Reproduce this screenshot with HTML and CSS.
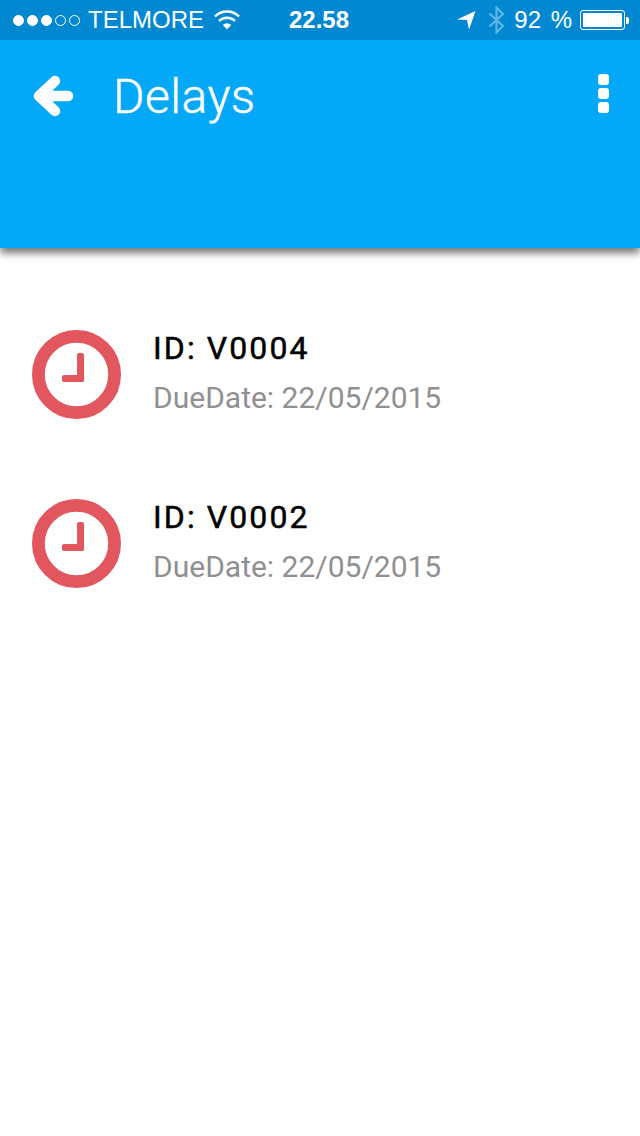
FILE: index.html
```html
<!DOCTYPE html>
<html>
<head>
  <title>Delays</title>
  <link rel="stylesheet" href="styles.css">
</head>
<body>
  <header class="appbar">
    <div class="status">
      <div class="status-left">
        <span class="dots">
          <i class="dot on"></i><i class="dot on"></i><i class="dot on"></i><i class="dot"></i><i class="dot"></i>
        </span>
        <span class="carrier">TELMORE</span>
        <svg class="wifi" width="26" height="20" viewBox="0 0 26 20">
          <path d="M1 6.500a17 17 0 0 1 24 0" fill="none" stroke="#fff" stroke-width="2.400"/>
          <path d="M5 11a11.500 11.500 0 0 1 16 0" fill="none" stroke="#fff" stroke-width="2.400"/>
          <path d="M8.800 15a6 6 0 0 1 8.400 0L13 19.500z" fill="#fff"/>
        </svg>
      </div>
      <span class="time">22.58</span>
      <div class="status-right">
        <svg class="arrow" width="19" height="20" viewBox="0 0 19 20">
          <path d="M0 9.500 18.500 1 12 19.500 10 10z" fill="#fff"/>
        </svg>
        <svg class="bt" width="17" height="28" viewBox="0 0 17 28">
          <path d="M1.500 7.500 15 20 8.500 26.500V1.500L15 8 1.500 20.500" fill="none" stroke="#5fb4e4" stroke-width="2.200"/>
        </svg>
        <span class="batt-text">92 %</span>
        <div class="battery"><div class="battery-fill"></div></div>
        <div class="battery-tip"></div>
      </div>
    </div>
    <div class="toolbar">
      <svg class="back" width="42" height="42" viewBox="0 0 42 42">
        <path d="M22 6 6 21 22 36M6 21H35" fill="none" stroke="#fff" stroke-width="10.500" stroke-linecap="round" stroke-linejoin="round"/>
      </svg>
      <h1 class="title">Delays</h1>
      <div class="menu"><i></i><i></i><i></i></div>
    </div>
  </header>

  <section class="list">
    <div class="item">
      <svg class="clock" width="89" height="90" viewBox="0 0 89 90">
        <circle cx="44.500" cy="44.500" r="38.100" fill="none" stroke="#e2575e" stroke-width="12.800"/>
        <rect x="45" y="23" width="7" height="29" rx="2" fill="#e2575e"/>
        <rect x="30" y="45" width="22" height="7" rx="2" fill="#e2575e"/>
      </svg>
      <div class="info">
        <h3>ID: V0004</h3>
        <p>DueDate: 22/05/2015</p>
      </div>
    </div>
    <div class="item">
      <svg class="clock" width="89" height="90" viewBox="0 0 89 90">
        <circle cx="44.500" cy="44.500" r="38.100" fill="none" stroke="#e2575e" stroke-width="12.800"/>
        <rect x="45" y="23" width="7" height="29" rx="2" fill="#e2575e"/>
        <rect x="30" y="45" width="22" height="7" rx="2" fill="#e2575e"/>
      </svg>
      <div class="info">
        <h3>ID: V0002</h3>
        <p>DueDate: 22/05/2015</p>
      </div>
    </div>
  </section>
</body>
</html>
```

FILE: styles.css
```css
html, body {
  margin: 0;
  padding: 0;
  background-color: white;
}
body {
  font-family: Roboto, sans-serif;
  height: 1136px;
  overflow: hidden;
}
.appbar {
  height: 248px;
  background-color: #03a9f8;
  box-shadow: 0 5px 8px rgba(0, 0, 0, 0.55);
}
.status {
  height: 40px;
  background-color: #0288d1;
  color: white;
  font-family: "Liberation Sans", sans-serif;
  font-size: 24px;
  display: flex;
  align-items: center;
  justify-content: space-between;
  padding: 0 11px 0 13px;
}
.status-left, .status-right {
  display: flex;
  align-items: center;
}
.status-left {
  width: 236px;
}
.status-right {
  width: 240px;
  justify-content: flex-end;
}
.dots {
  display: flex;
  gap: 3px;
}
.dot {
  width: 9px;
  height: 9px;
  border: 1px solid white;
  border-radius: 50%;
}
.dot.on {
  background-color: white;
}
.carrier {
  margin-left: 8px;
}
.wifi {
  margin-left: 10px;
}
.time {
  font-weight: bold;
}
.arrow {
  margin-right: 12px;
}
.bt {
  margin-right: 9px;
}
.batt-text {
  margin-right: 8px;
  word-spacing: 3px;
}
.battery {
  width: 39px;
  height: 14px;
  border: 1px solid white;
  border-radius: 3px;
  padding: 2px;
}
.battery-fill {
  height: 100%;
  width: 100%;
  background-color: white;
  border-radius: 1px;
}
.battery-tip {
  width: 3px;
  height: 7px;
  margin-left: 1px;
  background-color: white;
  border-radius: 0 2px 2px 0;
}
.toolbar {
  display: flex;
  align-items: center;
  height: 112px;
  padding: 0 31px 0 33px;
}
.back {
  flex-shrink: 0;
}
.title {
  margin: 0 0 0 38px;
  flex: 1;
  font-size: 48px;
  font-weight: 300;
  letter-spacing: 0.5px;
  -webkit-text-stroke: 0.4px white; /* between light and regular */
  color: white;
}
.menu {
  display: flex;
  flex-direction: column;
  gap: 3px;
  margin-bottom: 6px;
}
.menu i {
  display: block;
  width: 11px;
  height: 11px;
  background-color: white;
  border-radius: 3px;
}
.list {
  padding: 82px 32px 0;
  display: flex;
  flex-direction: column;
  gap: 79px;
}
.item {
  display: flex;
  align-items: center;
  height: 90px;
}
.info {
  margin-left: 32px;
  padding-bottom: 6px;
}
.info h3 {
  margin: 0;
  font-size: 32px;
  font-weight: 400;
  letter-spacing: 2.1px;
  -webkit-text-stroke: 0.5px black;
  color: black;
}
.info p {
  margin: 13px 0 0;
  font-size: 30px;
  color: #909090;
}
```
